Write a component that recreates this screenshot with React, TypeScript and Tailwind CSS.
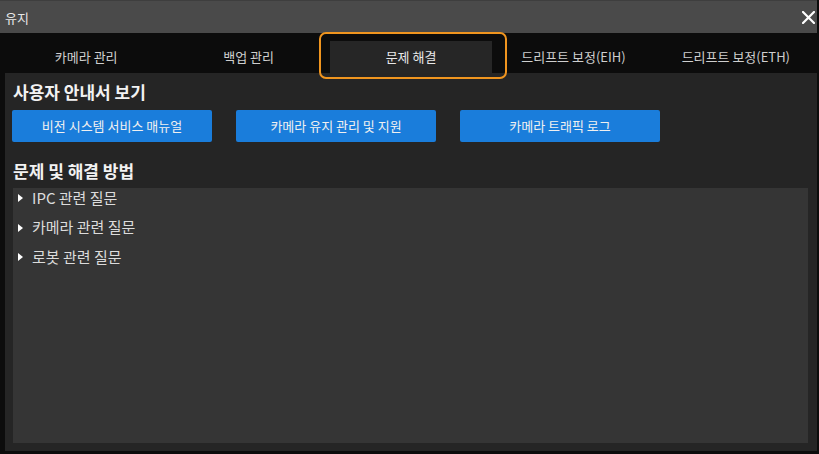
import React from "react";

const tabs = ["카메라 관리", "백업 관리", "문제 해결", "드리프트 보정(EIH)", "드리프트 보정(ETH)"];
const items = ["IPC 관련 질문", "카메라 관련 질문", "로봇 관련 질문"];
const buttons = ["비전 시스템 서비스 매뉴얼", "카메라 유지 관리 및 지원", "카메라 트래픽 로그"];

export default function App() {
  return (
    <div className="w-[819px] h-[454px] bg-[#0c0c0c] pr-[2px] flex flex-col overflow-hidden font-['Noto_Sans_CJK_KR','Noto_Sans',sans-serif]">
      <div className="h-[33px] shrink-0 bg-[#4a4a4a] border-t border-[#3e3e3e] flex items-center justify-between pl-[5px] pr-[2px]">
        <span className="text-[13px] text-[#e6e6e6] leading-none">유지</span>
        <svg width="13" height="13" viewBox="0 0 13 13">
          <path d="M1 1 L12 12 M12 1 L1 12" stroke="#ffffff" strokeWidth="2.2" strokeLinecap="square" />
        </svg>
      </div>
      <div className="h-[40px] shrink-0 flex items-end pl-[5px]">
        {tabs.map((t, i) => (
          <div
            key={t}
            className={
              i === 2
                ? "relative flex-1 h-[32px] flex items-center justify-center bg-[#262626] text-[13px] text-[#e8e8e8]"
                : "flex-1 h-[32px] flex items-center justify-center text-[13px] text-[#cfcfcf]"
            }
          >
            {t}
            {i === 2 && (
              <div className="absolute left-[-11px] right-[-15px] top-[-9px] bottom-[-6px] border-2 border-[#f0951f] rounded-[7px] pointer-events-none" />
            )}
          </div>
        ))}
      </div>
      <div className="ml-[5px] h-[378px] shrink-0 bg-[#252525] pl-[8px] pr-[9px] pt-[8px] pb-[8px] flex flex-col">
        <div className="h-[22px] leading-[22px] text-[17px] font-bold text-[#f2f2f2]">사용자 안내서 보기</div>
        <div className="mt-[7px] flex gap-[24px] -ml-[1px]">
          {buttons.map((b) => (
            <div
              key={b}
              className="w-[200px] h-[32px] bg-[#1a7ddb] rounded-[2px] flex items-center justify-center text-[13px] text-[#f0f0f0]"
            >
              {b}
            </div>
          ))}
        </div>
        <div className="mt-[18px] h-[22px] leading-[22px] text-[17px] font-bold text-[#f2f2f2]">문제 및 해결 방법</div>
        <div className="mt-[6px] flex-1 bg-[#353535] flex flex-col gap-[9.5px]">
          {items.map((it) => (
            <div key={it} className="h-[20px] flex items-center text-[15px] text-[#dcdcdc]">
              <svg width="5" height="8" viewBox="0 0 5 8" className="ml-[5px] mr-[9px]">
                <polygon points="0,0 5,4 0,8" fill="#ffffff" />
              </svg>
              {it}
            </div>
          ))}
        </div>
      </div>
    </div>
  );
}
